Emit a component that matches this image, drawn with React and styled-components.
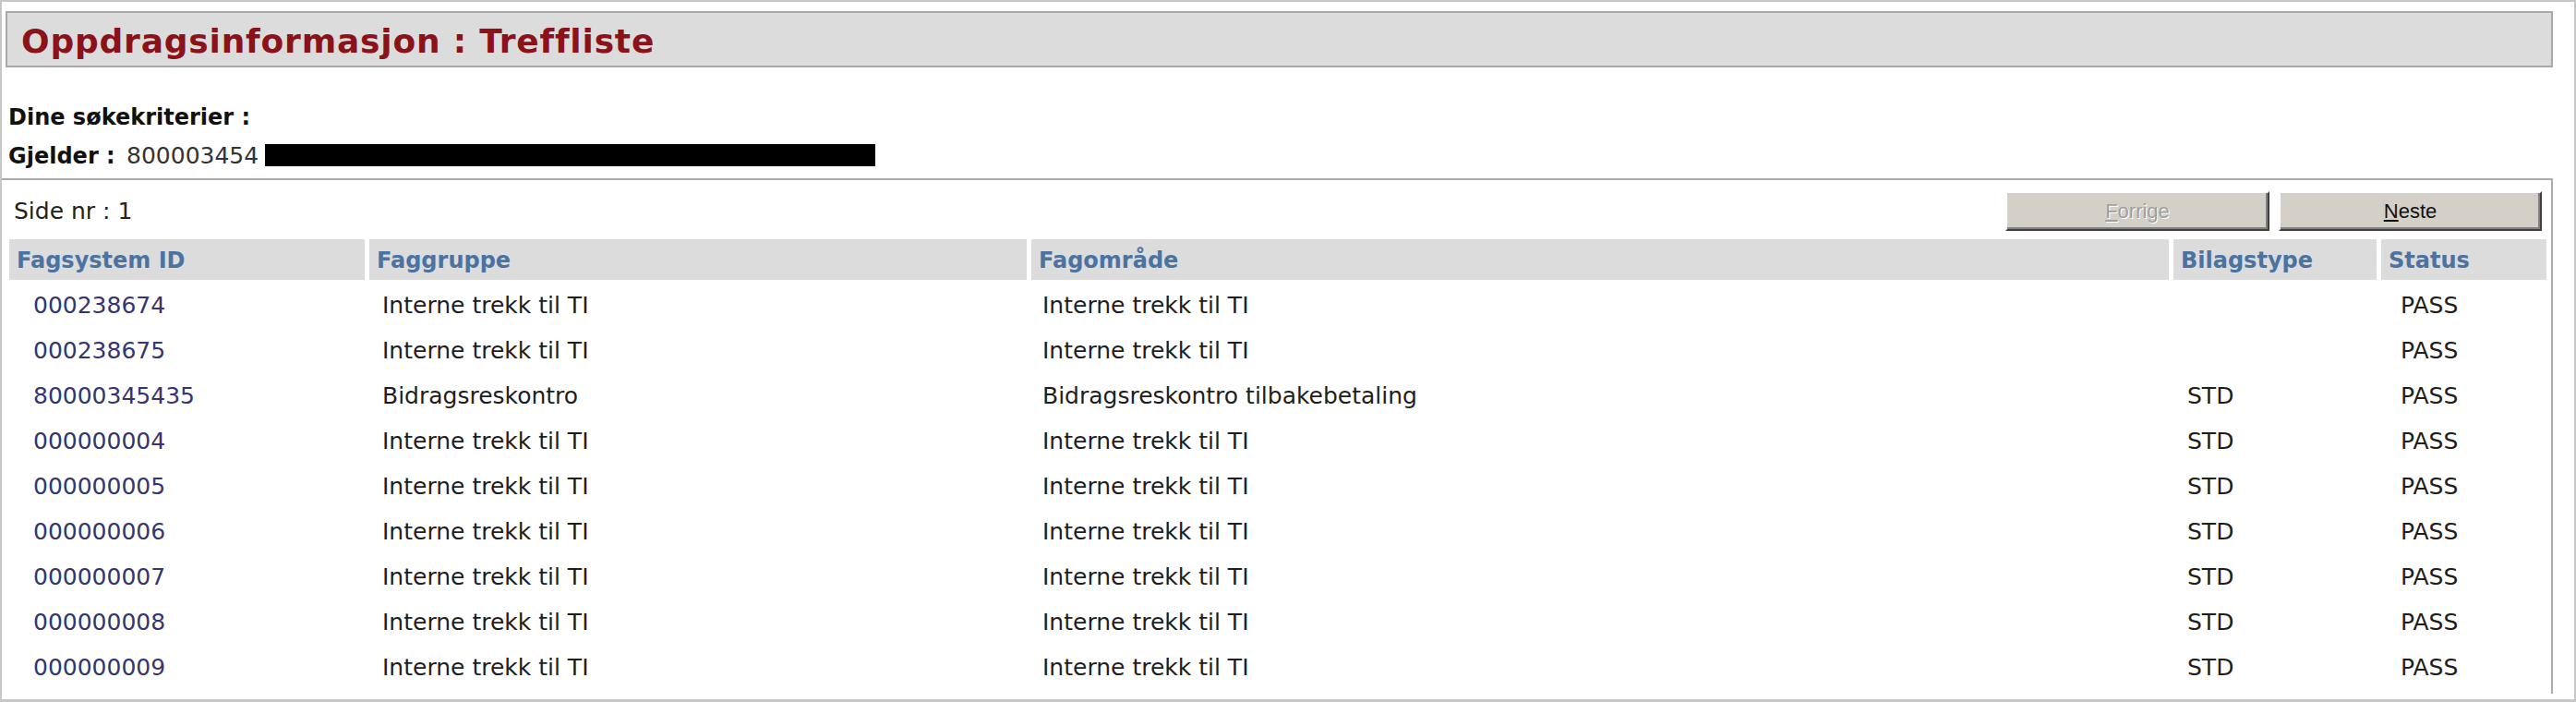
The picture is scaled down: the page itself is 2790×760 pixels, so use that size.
import React from 'react'
import styled, { createGlobalStyle } from 'styled-components'

const GlobalStyle = createGlobalStyle`
  html, body {
    margin: 0;
    padding: 0;
    background: #ffffff;
  }
  body {
    font-family: "DejaVu Sans", Verdana, sans-serif;
    color: #1e1e1e;
  }
`

const Frame = styled.div`
  box-sizing: border-box;
  width: 2790px;
  height: 760px;
  border: 2px solid #c6c6c6;
  border-bottom-width: 3px;
  overflow: hidden;
  background: #ffffff;
`

const TitleBar = styled.div`
  box-sizing: border-box;
  height: 61px;
  margin: 10px 23px 0 4px;
  padding: 4px 0 0 15px;
  background: #dcdcdc;
  border: 2px solid #a9a9a9;
`

const Title = styled.h1`
  margin: 0;
  font-family: "DejaVu Sans", Verdana, sans-serif;
  font-size: 36px;
  font-weight: bold;
  letter-spacing: 0.8px;
  line-height: 53px;
  color: #8a1218;
  white-space: nowrap;
`

const Criteria = styled.div`
  margin-top: 34px;
  padding-left: 7px;
`

const CriteriaLine = styled.div`
  font-size: 24px;
  line-height: 41px;
  height: 41px;
  white-space: nowrap;
  color: #111111;
`

const Label = styled.span`
  font-weight: bold;
`

const Value = styled.span`
  margin-left: 4px;
  font-size: 25px;
  color: #333333;
`

const Redacted = styled.span`
  display: inline-block;
  width: 661px;
  height: 24px;
  margin-left: 7px;
  vertical-align: -3px;
  background: #000000;
`

const Panel = styled.div`
  margin: 4px 23px 0 0;
  border-top: 2px solid #ababab;
  border-right: 2px solid #ababab;
  padding-bottom: 2px;
`

const Toolbar = styled.div`
  display: flex;
  align-items: center;
  gap: 10px;
  padding: 12px 10px 0 13px;
`

const PageNr = styled.div`
  flex: 1;
  font-size: 25px;
  color: #222222;
`

const Button = styled.button`
  box-sizing: border-box;
  width: ${({ $w }) => $w}px;
  height: 43px;
  padding: 0;
  font-family: "Liberation Sans", Arial, sans-serif;
  font-size: 22px;
  color: ${({ disabled }) => (disabled ? '#a19f99' : '#111111')};
  text-shadow: ${({ disabled }) => (disabled ? '1px 1px 0 #ffffff' : 'none')};
  background: #d4d0c8;
  border: 2px solid;
  border-color: #ffffff #404040 #404040 #ffffff;
  box-shadow: inset -2px -2px 0 #808080;
  cursor: ${({ disabled }) => (disabled ? 'default' : 'pointer')};
`

const Table = styled.table`
  table-layout: fixed;
  width: 2758px;
  margin: 4px 0 0 3px;
  border-collapse: separate;
  border-spacing: 5px;
`

const Th = styled.th`
  box-sizing: border-box;
  height: 44px;
  padding: 3px 0 0 8px;
  background: #dcdcdc;
  font-size: 24px;
  font-weight: bold;
  line-height: 41px;
  color: #4b73a1;
  text-align: left;
  white-space: nowrap;
`

const Td = styled.td`
  box-sizing: border-box;
  height: 44px;
  padding: 1px 0 0 ${({ $pad }) => $pad}px;
  font-size: 25px;
  line-height: 43px;
  color: ${({ $link }) => ($link ? '#35356f' : '#1e1e1e')};
  white-space: nowrap;
`

const columns = [
  { title: 'Fagsystem ID', width: 385, pad: 26 },
  { title: 'Faggruppe', width: 712, pad: 14 },
  { title: 'Fagområde', width: 1232, pad: 12 },
  { title: 'Bilagstype', width: 220, pad: 15 },
  { title: 'Status', width: 179, pad: 21 },
]

const rows = [
  ['000238674', 'Interne trekk til TI', 'Interne trekk til TI', '', 'PASS'],
  ['000238675', 'Interne trekk til TI', 'Interne trekk til TI', '', 'PASS'],
  ['80000345435', 'Bidragsreskontro', 'Bidragsreskontro tilbakebetaling', 'STD', 'PASS'],
  ['000000004', 'Interne trekk til TI', 'Interne trekk til TI', 'STD', 'PASS'],
  ['000000005', 'Interne trekk til TI', 'Interne trekk til TI', 'STD', 'PASS'],
  ['000000006', 'Interne trekk til TI', 'Interne trekk til TI', 'STD', 'PASS'],
  ['000000007', 'Interne trekk til TI', 'Interne trekk til TI', 'STD', 'PASS'],
  ['000000008', 'Interne trekk til TI', 'Interne trekk til TI', 'STD', 'PASS'],
  ['000000009', 'Interne trekk til TI', 'Interne trekk til TI', 'STD', 'PASS'],
]

export default function App() {
  return (
    <>
      <GlobalStyle />
      <Frame>
        <TitleBar>
          <Title>Oppdragsinformasjon : Treffliste</Title>
        </TitleBar>

        <Criteria>
          <CriteriaLine><Label>Dine søkekriterier :</Label></CriteriaLine>
          <CriteriaLine>
            <Label>Gjelder : </Label><Value>800003454</Value><Redacted />
          </CriteriaLine>
        </Criteria>

        <Panel>
          <Toolbar>
            <PageNr>Side nr : 1</PageNr>
            <Button $w={286} disabled><u>F</u>orrige</Button>
            <Button $w={285}><u>N</u>este</Button>
          </Toolbar>

          <Table>
            <colgroup>
              {columns.map((c) => <col key={c.title} style={{ width: c.width }} />)}
            </colgroup>
            <thead>
              <tr>
                {columns.map((c) => <Th key={c.title}>{c.title}</Th>)}
              </tr>
            </thead>
            <tbody>
              {rows.map((r) => (
                <tr key={r[0]}>
                  {r.map((cell, i) => (
                    <Td key={i} $pad={columns[i].pad} $link={i === 0}>{cell}</Td>
                  ))}
                </tr>
              ))}
            </tbody>
          </Table>
        </Panel>
      </Frame>
    </>
  )
}
